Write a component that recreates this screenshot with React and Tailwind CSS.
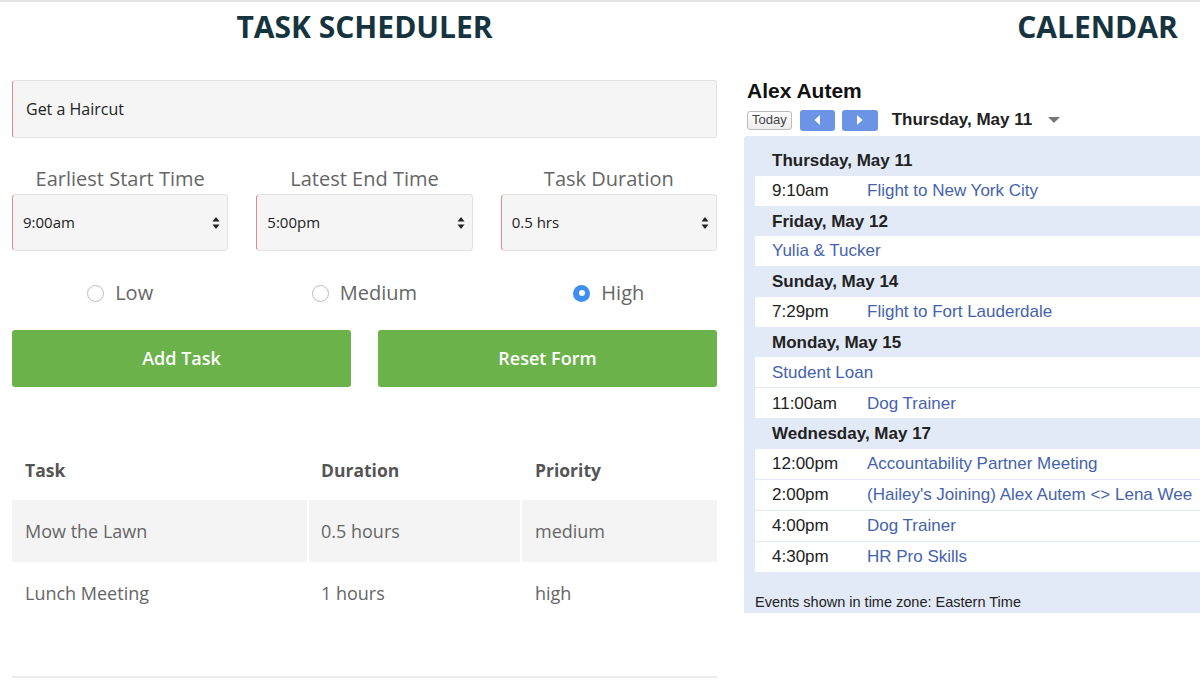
import React from 'react';

const sans = { fontFamily: '"Open Sans", "Noto Sans", sans-serif' };
const arial = { fontFamily: '"Liberation Sans", Arial, sans-serif' };

function SelectBox({ value }) {
    return (
        <div className="h-[57px] rounded-[4px] border border-[#e2e2e2] border-l-[#e08a8a] bg-[#f5f5f5] flex items-center justify-between pl-[10px] pr-[7px] text-[15px] text-[#222]">
            <span>{value}</span>
            <svg width="8" height="14" viewBox="0 0 8 14">
                <path d="M4 1 L7.5 5.5 H0.5 Z" fill="#222" />
                <path d="M4 13 L7.5 8.5 H0.5 Z" fill="#222" />
            </svg>
        </div>
    );
}

function Radio({ label, checked }) {
    return (
        <div className="flex items-center justify-center gap-[11px] text-[20px] text-[#666] h-[24px]">
            {checked ? (
                <span className="w-[17px] h-[17px] rounded-full bg-[#3d8ff0] flex items-center justify-center">
                    <span className="w-[6px] h-[6px] rounded-full bg-white" />
                </span>
            ) : (
                <span className="w-[17px] h-[17px] rounded-full border border-[#bdbdbd] bg-white" />
            )}
            <span>{label}</span>
        </div>
    );
}

function DayHeader({ children }) {
    return (
        <div className="h-[29.6px] flex items-center pl-[17px] text-[17px] font-bold text-[#222]">
            {children}
        </div>
    );
}

function Event({ time, title }) {
    return (
        <div className="h-[30px] mb-[1px] bg-white flex items-center pl-[17px] text-[17px] whitespace-nowrap overflow-hidden">
            {time && <span className="w-[95px] shrink-0 text-[#222]">{time}</span>}
            <span className="text-[#4563ad]">{title}</span>
        </div>
    );
}

export default function App() {
    return (
        <div className="w-[1200px] h-[680px] overflow-hidden bg-white border-t-2 border-[#e4e4e4]">
            <div className="flex gap-[28px] pl-[12px]">
                {/* Task scheduler */}
                <div className="w-[705px] shrink-0" style={sans}>
                    <div className="h-[48px] flex items-center justify-center text-[30px] font-bold text-[#163440]">
                        TASK SCHEDULER
                    </div>
                    <div className="mt-[30px] h-[58px] rounded-[3px] border border-[#e2e2e2] border-l-[#e08a8a] bg-[#f5f5f5] flex items-center pl-[13px] text-[16px] text-[#222]">
                        Get a Haircut
                    </div>

                    <div className="grid grid-cols-3 gap-x-[28px] mt-[29px]">
                        <div className="text-center text-[20px] text-[#666] leading-[24px]">Earliest Start Time</div>
                        <div className="text-center text-[20px] text-[#666] leading-[24px]">Latest End Time</div>
                        <div className="text-center text-[20px] text-[#666] leading-[24px]">Task Duration</div>
                        <div className="mt-[3px]"><SelectBox value="9:00am" /></div>
                        <div className="mt-[3px]"><SelectBox value="5:00pm" /></div>
                        <div className="mt-[3px]"><SelectBox value="0.5 hrs" /></div>
                    </div>

                    <div className="grid grid-cols-3 gap-x-[28px] mt-[30px]">
                        <Radio label="Low" />
                        <Radio label="Medium" />
                        <Radio label="High" checked />
                    </div>

                    <div className="grid grid-cols-2 gap-x-[27px] mt-[25px]">
                        <button className="h-[57px] rounded-[3px] bg-[#6bb24b] text-white text-[18px] font-semibold">Add Task</button>
                        <button className="h-[57px] rounded-[3px] bg-[#6bb24b] text-white text-[18px] font-semibold">Reset Form</button>
                    </div>

                    {/* Task table */}
                    <div className="mt-[53px] border-b-2 border-[#ececec] pb-[52px]">
                        <div className="flex h-[60px] items-center text-[17.5px] font-bold text-[#555]">
                            <div className="w-[297px] pl-[13px]">Task</div>
                            <div className="w-[213px] pl-[12px]">Duration</div>
                            <div className="flex-1 pl-[13px]">Priority</div>
                        </div>
                        <div className="flex h-[62px] items-center bg-[#f4f4f4] text-[18px] text-[#666]">
                            <div className="w-[297px] h-full flex items-center pl-[13px] border-r-2 border-white">Mow the Lawn</div>
                            <div className="w-[213px] h-full flex items-center pl-[12px] border-r-2 border-white">0.5 hours</div>
                            <div className="flex-1 pl-[13px]">medium</div>
                        </div>
                        <div className="flex h-[62px] items-center text-[18px] text-[#666]">
                            <div className="w-[297px] pl-[13px]">Lunch Meeting</div>
                            <div className="w-[213px] pl-[12px]">1 hours</div>
                            <div className="flex-1 pl-[13px]">high</div>
                        </div>
                    </div>
                </div>

                {/* Calendar */}
                <div className="w-[705px] shrink-0">
                    <div className="h-[48px] flex items-center justify-center text-[30px] font-bold text-[#163440]" style={sans}>
                        CALENDAR
                    </div>
                    <div style={arial}>
                        <div className="mt-[29px] pl-[2px] text-[21px] font-bold text-[#111] leading-[24px]">Alex Autem</div>
                        <div className="flex items-center mt-[6px] pl-[2px] h-[22px]">
                            <span className="h-[19px] px-[4px] rounded-[3px] border border-[#bbb] bg-gradient-to-b from-white to-[#ececec] text-[13px] text-[#444] flex items-center">Today</span>
                            <span className="ml-[8px] w-[35px] h-[21px] rounded-[3px] bg-[#6b93e6] flex items-center justify-center">
                                <svg width="7" height="10" viewBox="0 0 7 10"><path d="M6 0 L0.5 5 L6 10 Z" fill="white" /></svg>
                            </span>
                            <span className="ml-[7px] w-[36px] h-[21px] rounded-[3px] bg-[#6b93e6] flex items-center justify-center">
                                <svg width="7" height="10" viewBox="0 0 7 10"><path d="M1 0 L6.5 5 L1 10 Z" fill="white" /></svg>
                            </span>
                            <span className="ml-[14px] text-[17px] font-bold text-[#222]">Thursday, May 11</span>
                            <svg className="ml-[16px]" width="12" height="7" viewBox="0 0 12 7"><path d="M0 0 H12 L6 6 Z" fill="#777" /></svg>
                        </div>

                        <div className="mt-[5px] -ml-[1px] bg-[#e2e9f7] rounded-tl-[3px] pt-[10px] pl-[11px] pb-[3px]">
                            <DayHeader>Thursday, May 11</DayHeader>
                            <Event time="9:10am" title="Flight to New York City" />
                            <DayHeader>Friday, May 12</DayHeader>
                            <Event title="Yulia & Tucker" />
                            <DayHeader>Sunday, May 14</DayHeader>
                            <Event time="7:29pm" title="Flight to Fort Lauderdale" />
                            <DayHeader>Monday, May 15</DayHeader>
                            <Event title="Student Loan" />
                            <Event time="11:00am" title="Dog Trainer" />
                            <DayHeader>Wednesday, May 17</DayHeader>
                            <Event time="12:00pm" title="Accountability Partner Meeting" />
                            <Event time="2:00pm" title="(Hailey's Joining) Alex Autem <> Lena Wee" />
                            <Event time="4:00pm" title="Dog Trainer" />
                            <Event time="4:30pm" title="HR Pro Skills" />
                            <div className="mt-[22px] text-[14.5px] text-[#222] leading-[16px]">Events shown in time zone: Eastern Time</div>
                        </div>
                    </div>
                </div>
            </div>
        </div>
    );
}
